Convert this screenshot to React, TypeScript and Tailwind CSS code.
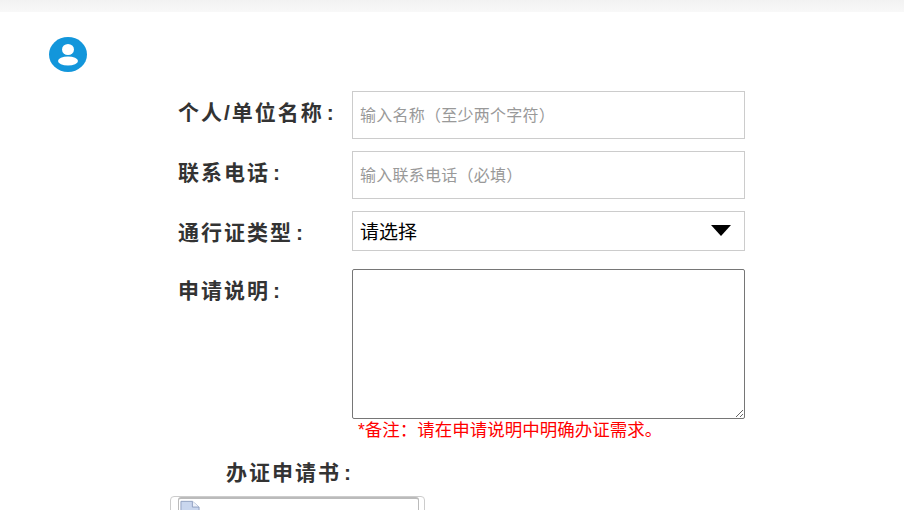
const labelClass = "w-[174px] shrink-0 pt-[8px] text-[21px] font-bold tracking-[2px] text-[#333] leading-[28px]"
const fieldClass =
  "w-[393px] border border-[#ccc] bg-white px-[7px] outline-none placeholder:text-[#999] text-[16px]"

function Colon() {
  return <span className="ml-[3px]">:</span>
}

export default function App() {
  return (
    <div className="h-[510px] overflow-hidden bg-white font-['Liberation_Sans','Noto_Sans_CJK_SC',sans-serif]">
      <div className="h-3 bg-gradient-to-b from-[#f2f2f2] to-[#f8f8f8]" />

      <div className="pl-[49px] pt-[25px]">
        <svg width="38" height="35" viewBox="0 0 38 35" className="block">
          <ellipse cx="19" cy="17.5" rx="19" ry="17.5" fill="#1296db" />
          <ellipse cx="19" cy="12.5" rx="6" ry="5.5" fill="#fff" />
          <ellipse cx="19" cy="24" rx="10" ry="4.5" fill="#fff" />
        </svg>
      </div>

      <div className="flex flex-col pl-[178px] pt-[19px]">
        <div className="flex items-start">
          <label className={labelClass}>
            个人/单位名称
            <Colon />
          </label>
          <input className={`${fieldClass} h-12 pt-[2px] tracking-[0.25px]`} placeholder="输入名称（至少两个字符）" />
        </div>

        <div className="mt-3 flex items-start">
          <label className={labelClass}>
            联系电话
            <Colon />
          </label>
          <input className={`${fieldClass} h-12 pt-[2px] tracking-[0.25px]`} placeholder="输入联系电话（必填）" />
        </div>

        <div className="mt-3 flex items-start">
          <label className={labelClass}>
            通行证类型
            <Colon />
          </label>
          <div className="relative">
            <select className={`${fieldClass} block h-10 appearance-none pt-[5px] text-[19px] text-black`}>
              <option>请选择</option>
            </select>
            <svg
              width="20"
              height="11"
              viewBox="0 0 20 11"
              className="pointer-events-none absolute right-[14px] top-[14px]"
            >
              <path d="M0 0H20L10 11Z" fill="#000" />
            </svg>
          </div>
        </div>

        <div className="mt-[18px] flex items-start">
          <label className={labelClass}>
            申请说明
            <Colon />
          </label>
          <textarea className="block h-[150px] w-[393px] rounded-[2px] border border-[#767676] bg-white outline-none" />
        </div>

        <div className="pl-[180px] text-[17.5px] leading-[22px] text-[#f00]">*备注：请在申请说明中明确办证需求。</div>

        <div className="pl-[48px] pt-[18px] pb-[1px] text-[21px] font-bold leading-[28px] tracking-[2px] text-[#333]">
          办证申请书
          <Colon />
        </div>
      </div>

      <div className="ml-[170px] mt-[8px] h-[40px] w-[255px] rounded-t-[4px] border border-[#ccc] pl-[7px]">
        <div className="h-full w-[241px] rounded-t-[3px] border-x border-t-2 border-[#bbb] pl-[1px] pt-[1px]">
          <svg width="20" height="16" viewBox="0 0 21 16" className="block">
            <path d="M1 1H13L20 7V16H1Z" fill="#c9d6ee" stroke="#8f9fc0" />
            <path d="M13 1V7H20" fill="#eef2fa" stroke="#8f9fc0" />
          </svg>
        </div>
      </div>
    </div>
  )
}
